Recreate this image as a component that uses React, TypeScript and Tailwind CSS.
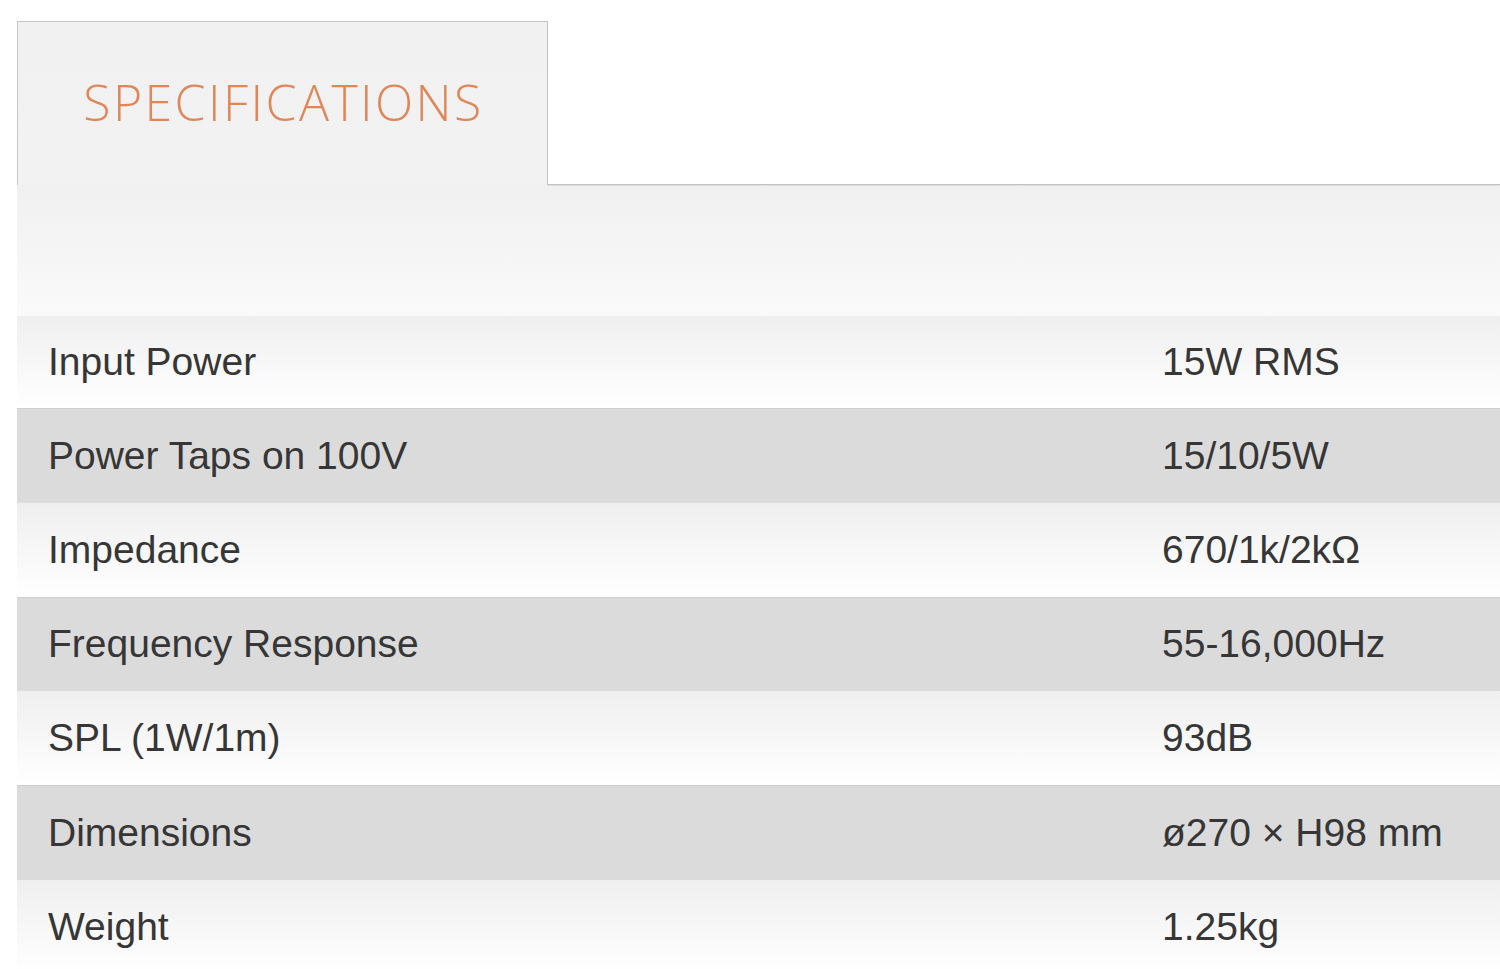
const specs = [
  { label: 'Input Power', value: '15W RMS', h: 'h-[92px]' },
  { label: 'Power Taps on 100V', value: '15/10/5W', h: 'h-[95px]' },
  { label: 'Impedance', value: '670/1k/2kΩ', h: 'h-[94px]' },
  { label: 'Frequency Response', value: '55-16,000Hz', h: 'h-[94px]' },
  { label: 'SPL (1W/1m)', value: '93dB', h: 'h-[94px]' },
  { label: 'Dimensions', value: 'ø270 × H98 mm', h: 'h-[95px]' },
  { label: 'Weight', value: '1.25kg', h: 'h-[94px]' },
];

export default function App() {
  return (
    <div className="min-h-screen w-full overflow-hidden bg-white pl-[17px] pt-[21px]">
      {/* tab strip */}
      <div className="flex">
        <div className="flex h-[164px] w-[531px] items-center justify-center border border-b-0 border-[#c6c6c6] bg-linear-to-b from-[#f1f1f1] to-[#f2f2f2]">
          <span className="pb-[2px] pl-[2px] font-['Open_Sans',sans-serif] text-[50px] font-light tracking-[2.4px] text-[#e0875a]">
            SPECIFICATIONS
          </span>
        </div>
        <div className="flex-1 border-b border-[#c3c3c3] shadow-[0_1px_1px_rgba(0,0,0,0.06)]" />
      </div>

      {/* panel */}
      <div className="h-[131px] bg-linear-to-b from-[#f0f0f0] to-[#fafafa]" />

      <div className="font-['Liberation_Sans',Arial,sans-serif] text-[39px] text-[#363636]">
        {specs.map((s, i) => (
          <div
            key={s.label}
            className={
              i % 2 === 1
                ? `grid grid-cols-[1145px_1fr] items-center border-t border-[#cfcfcf] bg-[#dbdbdb] ${s.h}`
                : `grid grid-cols-[1145px_1fr] items-center bg-linear-to-b from-[#efefef] to-white ${s.h}`
            }
          >
            <div className="pl-[31px]">{s.label}</div>
            <div>{s.value}</div>
          </div>
        ))}
      </div>
    </div>
  );
}
